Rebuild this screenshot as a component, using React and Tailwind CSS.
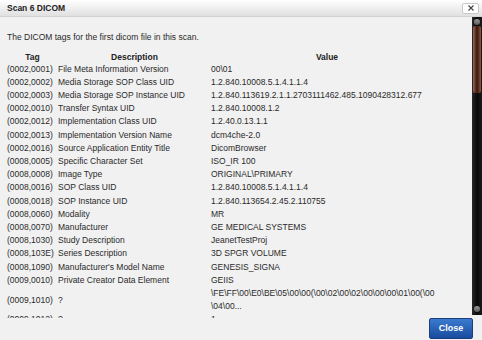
import React from "react";

const rows = [
  ["(0002,0001)", "File Meta Information Version", "00\\01"],
  ["(0002,0002)", "Media Storage SOP Class UID", "1.2.840.10008.5.1.4.1.1.4"],
  ["(0002,0003)", "Media Storage SOP Instance UID", "1.2.840.113619.2.1.1.2703111462.485.1090428312.677"],
  ["(0002,0010)", "Transfer Syntax UID", "1.2.840.10008.1.2"],
  ["(0002,0012)", "Implementation Class UID", "1.2.40.0.13.1.1"],
  ["(0002,0013)", "Implementation Version Name", "dcm4che-2.0"],
  ["(0002,0016)", "Source Application Entity Title", "DicomBrowser"],
  ["(0008,0005)", "Specific Character Set", "ISO_IR 100"],
  ["(0008,0008)", "Image Type", "ORIGINAL\\PRIMARY"],
  ["(0008,0016)", "SOP Class UID", "1.2.840.10008.5.1.4.1.1.4"],
  ["(0008,0018)", "SOP Instance UID", "1.2.840.113654.2.45.2.110755"],
  ["(0008,0060)", "Modality", "MR"],
  ["(0008,0070)", "Manufacturer", "GE MEDICAL SYSTEMS"],
  ["(0008,1030)", "Study Description", "JeanetTestProj"],
  ["(0008,103E)", "Series Description", "3D SPGR VOLUME"],
  ["(0008,1090)", "Manufacturer's Model Name", "GENESIS_SIGNA"],
  ["(0009,0010)", "Private Creator Data Element", "GEIIS"],
  ["(0009,1010)", "?", ["\\FE\\FF\\00\\E0\\BE\\05\\00\\00(\\00\\02\\00\\02\\00\\00\\00\\01\\00(\\00", "\\04\\00..."]],
  ["(0009,1012)", "?", "1"],
];

export default function App() {
  return (
    <div className="w-[482px] h-[340px] overflow-hidden bg-[#f1f1f1] flex flex-col font-['Liberation_Sans',Arial,sans-serif] text-[8.5px] text-[#2a2a2a]">
      <div className="h-[17px] shrink-0 flex items-center justify-between pl-[7px] pr-[3px] bg-gradient-to-b from-[#ffffff] to-[#e0e0e0] border-b border-[#d2d2d2]">
        <span className="font-bold text-[#222]">Scan 6 DICOM</span>
        <div className="w-[17px] h-[11px] border border-[#c8c8c8] bg-white rounded-[2px] flex items-center justify-center">
          <svg width="6" height="6" viewBox="0 0 6 6">
            <path d="M0.5 0.5L5.5 5.5M5.5 0.5L0.5 5.5" stroke="#444" strokeWidth="1.1" />
          </svg>
        </div>
      </div>
      <div className="h-[301px] shrink-0 flex">
        <div className="flex-1 overflow-hidden pl-[7px] pt-[13.5px]">
          <div className="leading-[13px] whitespace-nowrap">The DICOM tags for the first dicom file in this scan.</div>
          <div className="mt-[8px] grid grid-cols-[51px_153px_232px]">
            <div className="h-[11px] leading-[11px] font-bold text-center text-[#222]">Tag</div>
            <div className="h-[11px] leading-[11px] font-bold text-center text-[#222]">Description</div>
            <div className="h-[11px] leading-[11px] font-bold text-center text-[#222]">Value</div>
            {rows.map(([tag, desc, val]) => (
              <React.Fragment key={tag}>
                <div className="flex items-center whitespace-nowrap leading-[13.2px]">{tag}</div>
                <div className="flex items-center whitespace-nowrap leading-[13.2px]">{desc}</div>
                <div className="whitespace-nowrap leading-[13.2px]">
                  {Array.isArray(val) ? (
                    <>
                      <div>{val[0]}</div>
                      <div>{val[1]}</div>
                    </>
                  ) : (
                    val
                  )}
                </div>
              </React.Fragment>
            ))}
          </div>
        </div>
        <div className="w-[10px] h-[298px] shrink-0 bg-gradient-to-r from-[#2a2a2a] via-[#0a0a0a] to-[#1a1a1a] flex flex-col items-center py-[1px]">
          <div className="w-[6px] h-[6px] mt-[1px] rounded-full bg-gradient-to-b from-[#9a9a9a] to-[#5a5a5a]" />
          <div className="w-[8px] h-[67px] mt-[1px] rounded-[2px] bg-gradient-to-r from-[#9a6a55] via-[#3a160c] to-[#8a5a45]" />
          <div className="flex-1" />
          <div className="w-[6px] h-[6px] mb-[2px] rounded-full bg-gradient-to-b from-[#9a9a9a] to-[#5a5a5a]" />
        </div>
      </div>
      <div className="flex-1 flex justify-end items-start pr-[9px]">
        <button className="w-[44px] h-[21px] rounded-[2px] border border-[#1c3f7c] bg-gradient-to-b from-[#3a7bd0] to-[#1a4c9e] text-white font-bold text-[9px]">
          Close
        </button>
      </div>
    </div>
  );
}
